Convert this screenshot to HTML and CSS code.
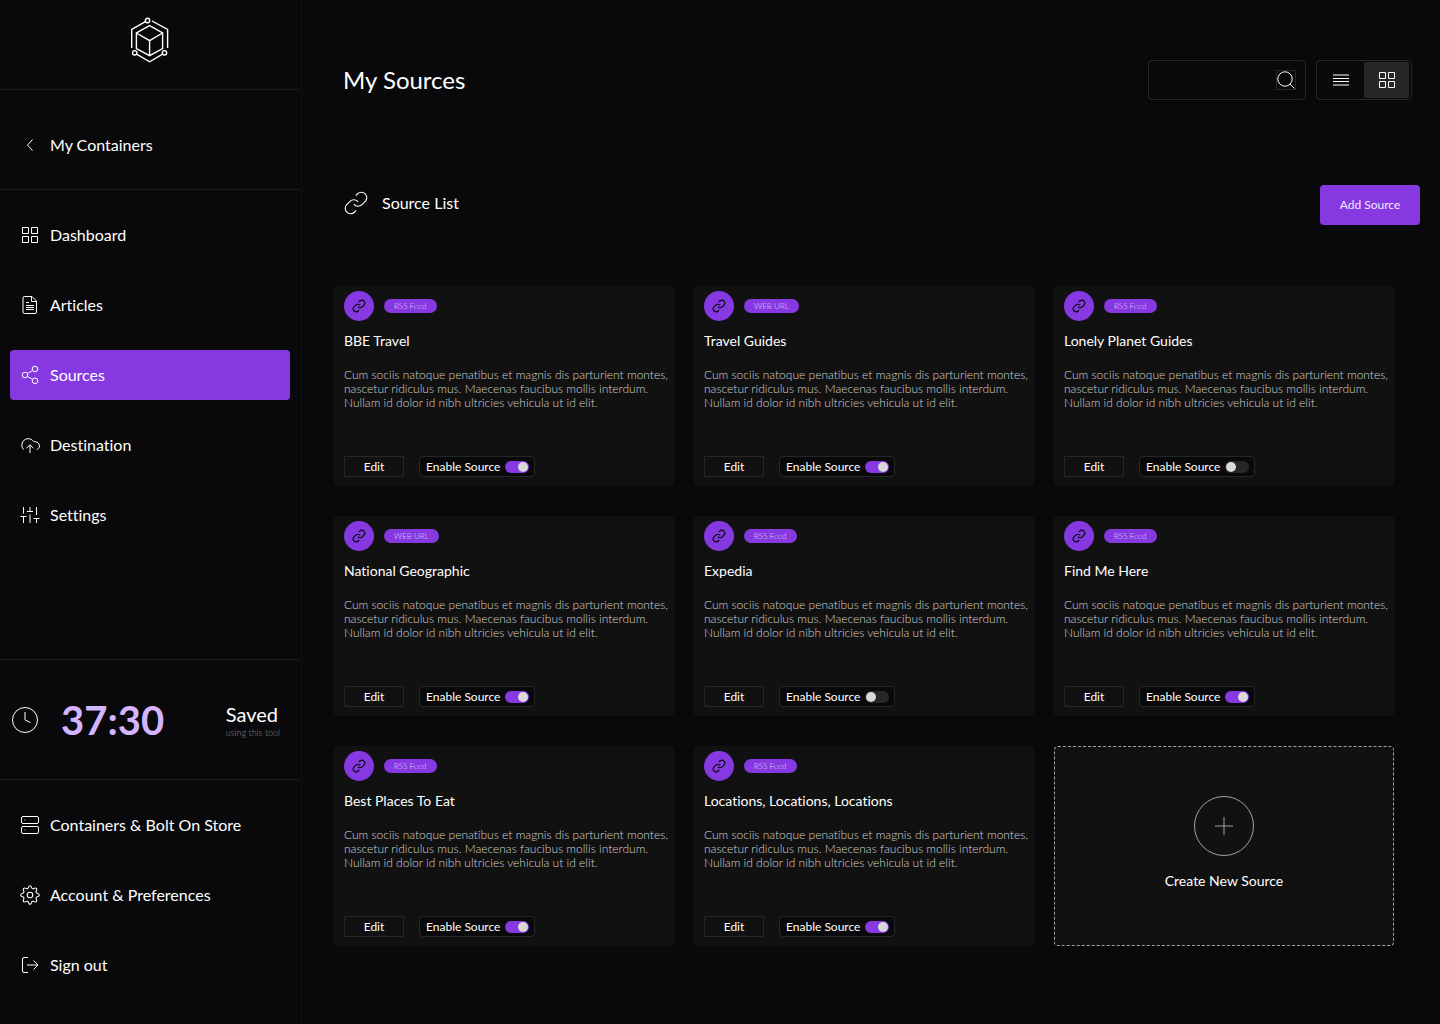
FILE: index.html
```html
<!DOCTYPE html>
<html lang="en">
<head>
  <meta charset="UTF-8">
  <title>My Sources</title>
  <meta name="viewport" content="width=device-width, initial-scale=1.0">
  <link rel="stylesheet" href="styles.css">
</head>
<body>
  <svg class="sprite" aria-hidden="true">
    <symbol id="i-link" viewBox="0 0 24 24"><path d="M10 13a5 5 0 0 0 7.54.54l3-3a5 5 0 0 0-7.07-7.07l-1.72 1.71M14 11a5 5 0 0 0-7.54-.54l-3 3a5 5 0 0 0 7.07 7.07l1.71-1.71"/></symbol>
    <symbol id="i-grid" viewBox="0 0 20 20"><path d="M2.5 2.5h6v6h-6zM11.5 2.5h6v6h-6zM2.5 11.5h6v6h-6zM11.5 11.5h6v6h-6z"/></symbol>
  </svg>

  <aside class="sidebar">
    <a class="logo" href="#" aria-label="Home">
      <svg width="40" height="46" viewBox="0 0 40 46">
        <path d="M15.4 4.6 1.7 12.5V31M22 4l15.6 8.5V31M7 37.4l12.6 7.4 12.6-7.4"/>
        <path d="M19.6 8.6 32.6 16v15.5l-13 7.2-13.2-7.2V16zM6.4 16l13.2 7.6 13-7.6M19.6 23.6v15"/>
        <circle cx="17.5" cy="3.5" r="2.2"/><circle cx="4.7" cy="35.8" r="2.2"/><circle cx="34.5" cy="35.8" r="2.2"/>
      </svg>
    </a>

    <nav class="back">
      <a class="nav-link" href="#"><svg class="icon" viewBox="0 0 20 20"><path d="M12.5 4.5 7.5 10l5 5.5"/></svg>My Containers</a>
    </nav>

    <nav class="menu">
      <a class="nav-link" href="#"><svg class="icon"><use href="#i-grid"/></svg>Dashboard</a>
      <a class="nav-link" href="#"><svg class="icon" viewBox="0 0 20 20"><path d="M12 1.5H4.5A1.5 1.5 0 0 0 3 3v14a1.5 1.5 0 0 0 1.500 1.500H15a1.500 1.500 0 0 0 1.500-1.500V6zM11.500 1.500V6.500h5M6 7.500h3M6 10.500h8M6 12.500h8M6 14.500h8"/></svg>Articles</a>
      <a class="nav-link active" href="#"><svg class="icon" viewBox="0 0 20 20"><circle cx="5" cy="10" r="2.8"/><circle cx="15" cy="4" r="2.8"/><circle cx="15" cy="15.8" r="2.8"/><path d="m7.400 8.600 5.200-3.100M7.400 11.400l5.200 3"/></svg>Sources</a>
      <a class="nav-link" href="#"><svg class="icon" viewBox="0 0 20 20"><path d="M3.500 14.500A6.500 6.500 0 1 1 13.700 6.500c3.200 0 5.800 1.700 5.800 4.500 0 1.800-1.200 3.200-2.800 3.500M10 18V10M6.500 13.300 10 9.800l3.500 3.500"/></svg>Destination</a>
      <a class="nav-link" href="#"><svg class="icon" viewBox="0 0 20 20"><path d="M3.500 2v6.500M3.500 12v6M.5 11.500h6M10 2v4M7 6.500h6M10 9.500V18M16.500 2v8M13.500 13.500h6M16.500 13.500V18"/></svg>Settings</a>
    </nav>

    <div class="timer">
      <svg class="clock" viewBox="0 0 26 26"><circle cx="13" cy="13" r="12.5"/><path d="M13 5v8l5.500 2.500"/></svg>
      <strong class="time">37:30</strong>
      <div class="saved">Saved<small>using this tool</small></div>
    </div>

    <nav class="menu-bottom">
      <a class="nav-link" href="#"><svg class="icon" viewBox="0 0 20 20"><rect x="1.5" y="1.5" width="17" height="7" rx="1.5"/><rect x="1.5" y="11.5" width="17" height="7" rx="1.5"/><path class="dim" d="M4 5h2M4 15h2"/></svg>Containers &amp; Bolt On Store</a>
      <a class="nav-link" href="#"><svg class="icon gear" viewBox="0 0 24 24"><circle cx="12" cy="12" r="3.3"/><path d="M12 .8c1.300 0 1.600 1 1.900 2.300.4 1.300 1.500 1.700 2.700 1.100 1.200-.7 2.100-1.200 3.100-.2s.4 1.900-.2 3.100c-.6 1.200-.1 2.300 1.200 2.700 1.300.3 2.500.7 2.500 2.200s-1.200 1.900-2.500 2.200c-1.300.4-1.800 1.500-1.200 2.700.6 1.200 1.200 2.100.2 3.100s-1.900.4-3.100-.2c-1.200-.6-2.300-.2-2.700 1.100-.3 1.300-.6 2.300-1.900 2.300s-1.600-1-1.900-2.300c-.4-1.300-1.500-1.700-2.700-1.100-1.200.6-2.100 1.200-3.100.2s-.4-1.900.2-3.100c.6-1.200.1-2.300-1.200-2.700C2 13.900.8 13.500.8 12S2 10.100 3.300 9.800c1.300-.4 1.800-1.500 1.200-2.700C3.900 5.900 3.300 5 4.300 4s1.900-.5 3.100.2c1.200.6 2.300.2 2.700-1.100C10.400 1.800 10.700.8 12 .8z"/></svg>Account &amp; Preferences</a>
      <a class="nav-link" href="#"><svg class="icon" viewBox="0 0 20 20"><path d="M8 2.500H4A1.500 1.500 0 0 0 2.500 4v12A1.500 1.500 0 0 0 4 17.500h4M7 10h11M13.500 5.500 18 10l-4.500 4.500"/></svg>Sign out</a>
    </nav>
  </aside>

  <main>
    <header class="topbar">
      <h1>My Sources</h1>
      <form class="search" role="search">
        <input type="search" aria-label="Search sources">
        <button type="button" aria-label="Search"><svg viewBox="0 0 18 18"><circle cx="8" cy="8" r="7.2"/><path d="m13 13 4.500 4.500"/></svg></button>
      </form>
      <div class="view">
        <button type="button" aria-label="List view"><svg class="icon" viewBox="0 0 20 20"><path d="M2 5h16M2 8.500h16M2 11.500h16M2 15h16"/></svg></button>
        <button type="button" class="on" aria-label="Grid view"><svg class="icon"><use href="#i-grid"/></svg></button>
      </div>
    </header>

    <div class="list-head">
      <div class="list-title">
        <svg class="list-icon"><use href="#i-link"/></svg>
        <h2>Source List</h2>
      </div>
      <button type="button" class="add">Add Source</button>
    </div>

    <section class="cards">
      <article class="card">
        <div class="card-head"><span class="badge"><svg><use href="#i-link"/></svg></span><span class="tag">RSS Feed</span></div>
        <h3>BBE Travel</h3>
        <p>Cum sociis natoque penatibus et magnis dis parturient montes, nascetur ridiculus mus. Maecenas faucibus mollis interdum. Nullam id dolor id nibh ultricies vehicula ut id elit.</p>
        <div class="card-foot"><button type="button" class="edit">Edit</button><label class="enable">Enable Source<input type="checkbox" checked></label></div>
      </article>
      <article class="card">
        <div class="card-head"><span class="badge"><svg><use href="#i-link"/></svg></span><span class="tag">WEB URL</span></div>
        <h3>Travel Guides</h3>
        <p>Cum sociis natoque penatibus et magnis dis parturient montes, nascetur ridiculus mus. Maecenas faucibus mollis interdum. Nullam id dolor id nibh ultricies vehicula ut id elit.</p>
        <div class="card-foot"><button type="button" class="edit">Edit</button><label class="enable">Enable Source<input type="checkbox" checked></label></div>
      </article>
      <article class="card">
        <div class="card-head"><span class="badge"><svg><use href="#i-link"/></svg></span><span class="tag">RSS Feed</span></div>
        <h3>Lonely Planet Guides</h3>
        <p>Cum sociis natoque penatibus et magnis dis parturient montes, nascetur ridiculus mus. Maecenas faucibus mollis interdum. Nullam id dolor id nibh ultricies vehicula ut id elit.</p>
        <div class="card-foot"><button type="button" class="edit">Edit</button><label class="enable">Enable Source<input type="checkbox"></label></div>
      </article>
      <article class="card">
        <div class="card-head"><span class="badge"><svg><use href="#i-link"/></svg></span><span class="tag">WEB URL</span></div>
        <h3>National Geographic</h3>
        <p>Cum sociis natoque penatibus et magnis dis parturient montes, nascetur ridiculus mus. Maecenas faucibus mollis interdum. Nullam id dolor id nibh ultricies vehicula ut id elit.</p>
        <div class="card-foot"><button type="button" class="edit">Edit</button><label class="enable">Enable Source<input type="checkbox" checked></label></div>
      </article>
      <article class="card">
        <div class="card-head"><span class="badge"><svg><use href="#i-link"/></svg></span><span class="tag">RSS Feed</span></div>
        <h3>Expedia</h3>
        <p>Cum sociis natoque penatibus et magnis dis parturient montes, nascetur ridiculus mus. Maecenas faucibus mollis interdum. Nullam id dolor id nibh ultricies vehicula ut id elit.</p>
        <div class="card-foot"><button type="button" class="edit">Edit</button><label class="enable">Enable Source<input type="checkbox"></label></div>
      </article>
      <article class="card">
        <div class="card-head"><span class="badge"><svg><use href="#i-link"/></svg></span><span class="tag">RSS Feed</span></div>
        <h3>Find Me Here</h3>
        <p>Cum sociis natoque penatibus et magnis dis parturient montes, nascetur ridiculus mus. Maecenas faucibus mollis interdum. Nullam id dolor id nibh ultricies vehicula ut id elit.</p>
        <div class="card-foot"><button type="button" class="edit">Edit</button><label class="enable">Enable Source<input type="checkbox" checked></label></div>
      </article>
      <article class="card">
        <div class="card-head"><span class="badge"><svg><use href="#i-link"/></svg></span><span class="tag">RSS Feed</span></div>
        <h3>Best Places To Eat</h3>
        <p>Cum sociis natoque penatibus et magnis dis parturient montes, nascetur ridiculus mus. Maecenas faucibus mollis interdum. Nullam id dolor id nibh ultricies vehicula ut id elit.</p>
        <div class="card-foot"><button type="button" class="edit">Edit</button><label class="enable">Enable Source<input type="checkbox" checked></label></div>
      </article>
      <article class="card">
        <div class="card-head"><span class="badge"><svg><use href="#i-link"/></svg></span><span class="tag">RSS Feed</span></div>
        <h3>Locations, Locations, Locations</h3>
        <p>Cum sociis natoque penatibus et magnis dis parturient montes, nascetur ridiculus mus. Maecenas faucibus mollis interdum. Nullam id dolor id nibh ultricies vehicula ut id elit.</p>
        <div class="card-foot"><button type="button" class="edit">Edit</button><label class="enable">Enable Source<input type="checkbox" checked></label></div>
      </article>
      <button type="button" class="create">
        <svg viewBox="0 0 60 60"><circle cx="30" cy="30" r="29.5"/><path d="M21 30h18M30 21v18"/></svg>
        Create New Source
      </button>
    </section>
  </main>
</body>
</html>
```
FILE: styles.css
```css
* { box-sizing: border-box; }
body { margin: 0; display: flex; min-height: 100vh; background: #09090b; color: #fff; font-family: Lato, sans-serif; font-size: 16px; line-height: 20px; font-variant-ligatures: none; }
h1, h2, h3, p { margin: 0; font-weight: 400; }
a { color: inherit; text-decoration: none; }
button { padding: 0; border: none; background: none; color: inherit; font: inherit; cursor: pointer; }
svg { fill: none; stroke: currentColor; stroke-width: 1; display: block; flex: none; }
.sprite { display: none; }
.icon { width: 20px; height: 20px; }
.gear { stroke-width: 1.3; }

/* sidebar */
.sidebar { width: 302px; flex: none; display: flex; flex-direction: column; border-right: 1px solid #101012; padding-right: 1px; }
.logo { height: 90px; display: flex; justify-content: center; padding-top: 17px; border-bottom: 1px solid #1c1c1e; }
.logo svg { stroke-width: 1.4; }
.back { padding: 30px 10px 19px; border-bottom: 1px solid #1c1c1e; }
.menu, .menu-bottom { display: flex; flex-direction: column; gap: 20px; padding: 20px 10px; }
.menu { flex: 1; }
.menu-bottom { padding-bottom: 34px; }
.nav-link { display: flex; align-items: center; gap: 10px; height: 50px; padding: 0 10px; border-radius: 4px; }
.nav-link:hover { background: #18181b; }
.nav-link.active { background: #8639e0; }
.dim { opacity: 0.4; }
.timer { height: 121px; display: flex; align-items: center; padding: 0 20px 0 12px; border-top: 1px solid #1c1c1e; border-bottom: 1px solid #1c1c1e; }
.clock { width: 26px; height: 26px; }
.time { margin-left: 23px; font-size: 40px; line-height: 48px; color: #d4b4fe; }
.saved { margin-left: auto; padding-top: 3px; font-size: 20px; line-height: 24px; }
.saved small { display: block; font-size: 9px; line-height: 14px; font-weight: 300; color: #85858c; }

/* top of the page */
main { flex: 1; min-width: 0; padding: 60px 20px 40px 32px; }
.topbar { display: flex; align-items: center; gap: 10px; padding: 0 8px 0 9px; }
h1 { margin-right: auto; font-size: 24px; line-height: 30px; }
.search { width: 158px; height: 40px; display: flex; align-items: center; padding-right: 9px; border: 1px solid #27272a; border-radius: 4px; }
.search input { flex: 1; min-width: 0; height: 38px; padding: 0 10px; border: none; outline: none; background: none; color: #fff; font: inherit; }
.search button { width: 20px; height: 20px; border: 1px solid #27272a; }
.search svg { width: 18px; height: 18px; }
.view { width: 96px; height: 40px; display: flex; padding: 1px 2px 1px 1px; border: 1px solid #27272a; border-radius: 4px; }
.view button { flex: 1; display: flex; align-items: center; justify-content: center; border-radius: 2px; }
.view .on { flex: none; width: 45px; background: #27272a; }

.list-head { display: flex; justify-content: space-between; margin-top: 85px; padding-left: 9px; }
.list-title { display: flex; align-items: center; gap: 13px; height: 36px; }
.list-icon { width: 26px; height: 26px; }
h2 { font-size: 16px; }
.add { width: 100px; height: 40px; border-radius: 4px; background: #8639e0; color: #f4e8ff; font-size: 12px; }

/* cards */
.cards { display: grid; grid-template-columns: repeat(3, 1fr); gap: 30px 20px; margin-top: 61px; padding-right: 26px; }
.card { min-height: 200px; display: flex; flex-direction: column; padding: 5px 10px 9px; border-radius: 4px; background: #111; }
.card-head { display: flex; align-items: center; gap: 10px; }
.badge { width: 30px; height: 30px; display: flex; align-items: center; justify-content: center; border-radius: 50%; background: #8639e0; color: #09090b; }
.badge svg { width: 14px; height: 14px; stroke-width: 2; }
.tag { padding: 0 10px; border-radius: 7px; background: #8639e0; color: #e6d0ff; font-size: 8px; line-height: 14px; font-weight: 300; }
h3 { margin-top: 10px; font-size: 14px; }
.card p { margin: 17px -8px 0 0; font-size: 12px; line-height: 14px; font-weight: 300; color: #d4d4d4; }
.card-foot { display: flex; gap: 15px; margin-top: auto; font-size: 12px; }
.edit { width: 60px; height: 21px; border: 1px solid #27272a; border-radius: 1px; }
.enable { display: flex; align-items: center; gap: 5px; height: 21px; padding: 0 5px 0 6px; border: 1px solid #27272a; border-radius: 4px; background: #09090b; cursor: pointer; }
.enable input { appearance: none; width: 24px; height: 12px; margin: 0; padding: 1px; display: flex; border-radius: 6px; background: #27272a; cursor: pointer; }
.enable input::before { content: ""; width: 10px; height: 10px; border-radius: 50%; background: #d9d9d9; }
.enable input:checked { justify-content: flex-end; background: #8639e0; }

.create { min-height: 200px; display: flex; flex-direction: column; align-items: center; justify-content: center; gap: 15px; padding-bottom: 5px; border: 1px dashed #a1a1aa; border-radius: 4px; background: #111; font-size: 14px; }
.create svg { width: 60px; height: 60px; color: #a1a1aa; }
```
